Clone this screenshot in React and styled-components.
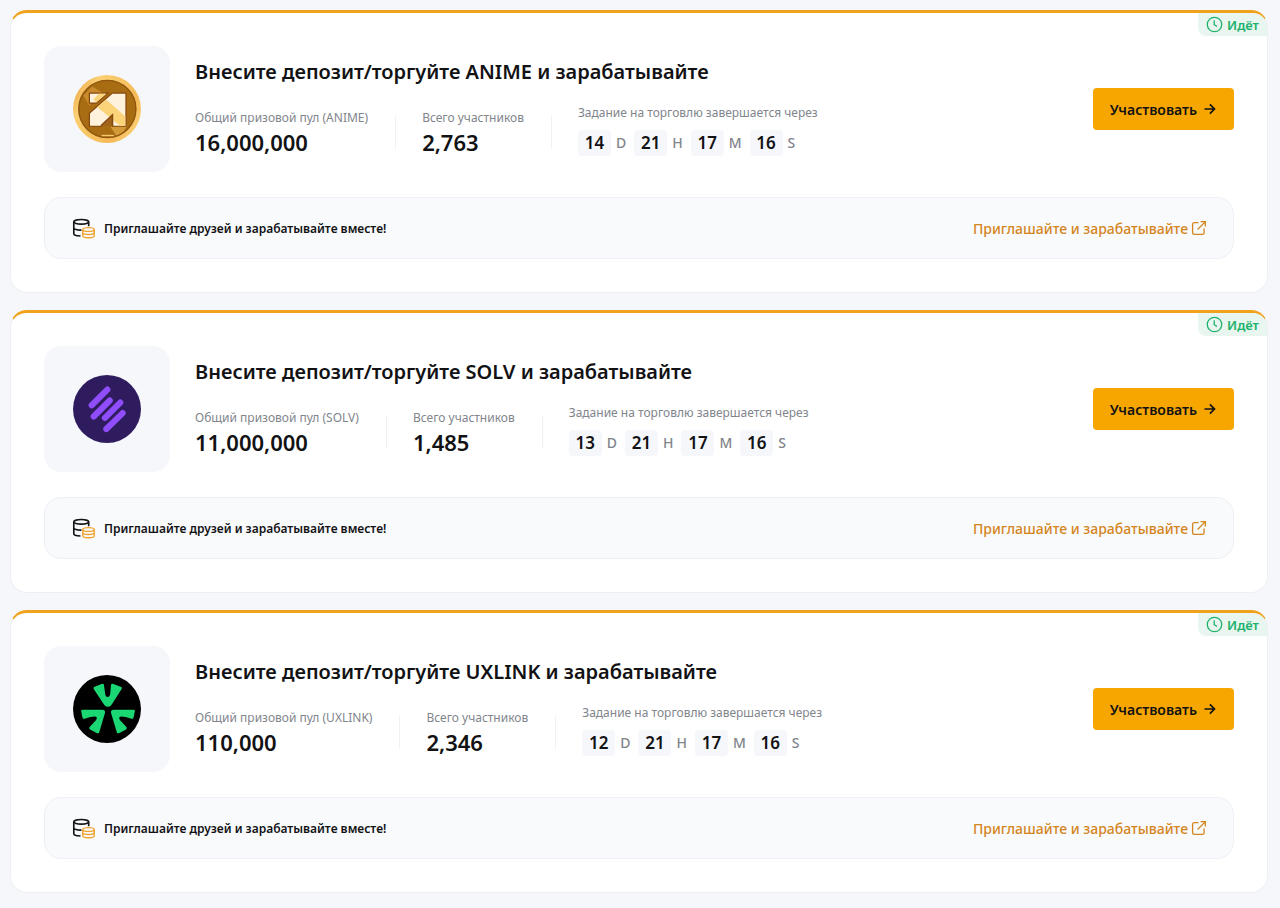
import styled, { createGlobalStyle } from "styled-components";

const GlobalStyle = createGlobalStyle`
  * {
    box-sizing: border-box;
  }

  body {
    margin: 0;
    background-color: #f5f7fb;
    color: #121214;
    font-family: "Noto Sans", sans-serif;
  }
`;

const List = styled.main`
  display: flex;
  flex-direction: column;
  gap: 17px;
  padding: 10px 12px 15px 10px;
`;

const Card = styled.article`
  position: relative;
  padding: 33px;
  border: 1px solid #edeff3;
  border-top: 3px solid #f0a21c;
  border-radius: 17px;
  background-color: white;
`;

const Badge = styled.span`
  position: absolute;
  top: 0;
  right: 0;
  display: flex;
  align-items: center;
  gap: 4px;
  height: 23px;
  padding: 0 8px;
  border-radius: 0 14px 0 8px;
  background-color: #e9f6f0;
  color: #20b26c;
  font-size: 13px;
  font-weight: 600;
`;

const Top = styled.div`
  display: flex;
  align-items: center;
  gap: 25px;
`;

const LogoBox = styled.div`
  display: flex;
  align-items: center;
  justify-content: center;
  width: 126px;
  height: 126px;
  border-radius: 17px;
  background-color: #f5f7fb;
`;

const Info = styled.div`
  flex: 1;
`;

const Title = styled.h2`
  margin: 0 0 17px;
  font-size: 20px;
  font-weight: 600;
  line-height: 30px;
`;

const Stats = styled.div`
  display: flex;
  align-items: center;
  height: 57px;
`;

const Divider = styled.span`
  width: 1px;
  height: 33px;
  margin: 0 26px 0 27px;
  background-color: #f0f1f4;
`;

const Label = styled.div`
  color: #81858c;
  font-size: 12px;
  line-height: 18px;
`;

const Value = styled.div`
  font-size: 22px;
  font-weight: 600;
  line-height: 30px;
`;

const Timer = styled.div`
  align-self: flex-start;
`;

const Countdown = styled.div`
  display: flex;
  align-items: center;
  margin-top: 8px;
`;

const Digits = styled.span`
  width: 33px;
  border-radius: 4px;
  background-color: #f5f7fa;
  font-size: 17px;
  font-weight: 600;
  line-height: 26px;
  text-align: center;
`;

const Unit = styled.span`
  margin: 0 8px 0 5px;
  color: #81858c;
  font-size: 14px;
  font-weight: 500;
  line-height: 26px;
`;

const JoinButton = styled.button`
  display: flex;
  align-items: center;
  justify-content: center;
  gap: 6px;
  height: 42px;
  padding: 0 17px;
  border: none;
  border-radius: 4px;
  background-color: #f7a600;
  color: #121214;
  font-family: inherit;
  font-size: 14px;
  font-weight: 600;
  cursor: pointer;
`;

const Invite = styled.div`
  display: flex;
  align-items: center;
  justify-content: space-between;
  height: 62px;
  margin-top: 25px;
  padding: 0 26px 0 27px;
  border: 1px solid #edf0f4;
  border-radius: 17px;
  background-color: #f9fafc;
`;

const InviteText = styled.div`
  display: flex;
  align-items: center;
  gap: 8px;
  font-size: 12px;
  font-weight: 600;
`;

const InviteLink = styled.a`
  display: flex;
  align-items: center;
  gap: 3px;
  color: #d4851d;
  font-size: 14px;
  font-weight: 500;
  text-decoration: none;
`;

const ClockIcon = () => (
  <svg width="17" height="17" viewBox="0 0 17 17" fill="none" stroke="currentColor" strokeWidth="1.3">
    <circle cx="8.5" cy="8.5" r="7.2" />
    <path d="M8.2 4.3v4.4l2.8 1.7" />
  </svg>
);

const ArrowIcon = () => (
  <svg width="14" height="14" viewBox="0 0 14 14" fill="none" stroke="currentColor" strokeWidth="1.7">
    <path d="M1.5 7h10M6.9 2.3 11.5 7l-4.6 4.7" />
  </svg>
);

const ExternalIcon = () => (
  <svg width="16" height="16" viewBox="0 0 17 17" fill="none" stroke="currentColor" strokeWidth="1.4">
    <path d="M8 2.8H3.4a1.7 1.7 0 0 0-1.7 1.7v9a1.7 1.7 0 0 0 1.7 1.7h8.8a1.7 1.7 0 0 0 1.7-1.7V9" />
    <path d="M10.2 1.8h5v5M15 2 7 10" />
  </svg>
);

const CoinsIcon = () => (
  <svg width="24" height="21" viewBox="0 0 25 22" fill="none" strokeWidth="1.7">
    <g stroke="#121214">
      <ellipse cx="9.6" cy="4" rx="7.8" ry="2.4" />
      <path d="M1.8 4v12.4c0 1.4 3 2.2 7 2.4M17.4 4v4.6M1.8 10.3c0 1.4 3.2 2.4 8 2.4" />
    </g>
    <g stroke="#f0a22e" strokeWidth="1.4">
      <ellipse cx="17.2" cy="12" rx="6" ry="2" />
      <path d="M11.2 12v6.5c0 1.2 2.6 2.2 6 2.2s6-1 6-2.2V12M11.2 15.2c0 1.2 2.6 2.1 6 2.1s6-.9 6-2.1" />
    </g>
  </svg>
);

const AnimeLogo = () => (
  <svg width="68" height="68" viewBox="0 0 200 200">
    <defs>
      <linearGradient id="anime-rim" x1="0" y1="0.2" x2="1" y2="0.8">
        <stop offset="0" stopColor="#eda747" />
        <stop offset="0.2" stopColor="#fbd074" />
        <stop offset="0.42" stopColor="#f7c765" />
        <stop offset="0.75" stopColor="#f5b958" />
        <stop offset="1" stopColor="#fbd478" />
      </linearGradient>
      <clipPath id="anime-face">
        <circle cx="101" cy="100" r="85" />
      </clipPath>
    </defs>
    <circle cx="100" cy="100" r="100" fill="url(#anime-rim)" />
    <g clipPath="url(#anime-face)">
      <rect width="200" height="200" fill="#a86c12" />
      <path d="M30 60 56 34l34 20-42 36z" fill="#c88a2c" />
      <path d="M110 152l50-4-25 42z" fill="#d39a3a" />
    </g>
    <circle cx="101" cy="100" r="84" fill="none" stroke="#8f560e" strokeWidth="4" />
    <g fill="#fff2dc" stroke="#85480f" strokeWidth="7" paintOrder="stroke">
      <path d="M50 55h48L68 81H50z" />
      <path d="M116 55h38v94h-36v-34l-36 34H50v-36z" />
    </g>
    <path d="M76 55h22L68 81 60 71z" fill="#fbd47a" />
    <path d="M71 94 97 72l57 50v27h-16z" fill="#fbd47a" />
    <path d="M118 149v-34l-36 34z" fill="#a0641a" />
    <path d="M116 149v-32l-34 32" fill="none" stroke="#85480f" strokeWidth="4" />
    <path d="M84 178h36" stroke="#f5c970" strokeWidth="4" />
  </svg>
);

const SolvLogo = () => (
  <svg width="68" height="68" viewBox="0 0 200 200">
    <circle cx="100" cy="100" r="100" fill="#2f1c5e" />
    <path
      d="M101 43 55 89M108 75 61 122M139 81 94 126M146 112 98 159"
      stroke="#8f4dfb"
      strokeWidth="18"
      strokeLinecap="round"
    />
  </svg>
);

const UxlinkLogo = () => {
  const sidePetal =
    "M24 106Q24 102 28 102L86 102Q96 102 94 112L77 169Q75 173 71 171L50 160Q46 157 49 153L68 132Q74 122 63 122Q54 122 34 129Q29 130 28 126Z";

  return (
    <svg width="68" height="68" viewBox="0 0 200 200">
      <circle cx="100" cy="100" r="100" fill="black" />
      <g fill="#1bd773">
        <path d="M62 35 86 26Q90 25 91 29L95 58Q97 65 102 65Q107 65 109 58L112 29Q113 25 117 26L142 35Q145 37 143 41L113 88Q103 99 92 88L61 41Q59 37 62 35Z" />
        <path d={sidePetal} />
        <path d={sidePetal} transform="translate(206 0) scale(-1 1)" />
      </g>
    </svg>
  );
};

const events = [
  { token: "ANIME", Logo: AnimeLogo, pool: "16,000,000", members: "2,763", time: ["14", "21", "17", "16"] },
  { token: "SOLV", Logo: SolvLogo, pool: "11,000,000", members: "1,485", time: ["13", "21", "17", "16"] },
  { token: "UXLINK", Logo: UxlinkLogo, pool: "110,000", members: "2,346", time: ["12", "21", "17", "16"] },
];

const units = ["D", "H", "M", "S"];

const EventCard = ({ token, Logo, pool, members, time }) => {
  return (
    <Card>
      <Badge>
        <ClockIcon />
        Идёт
      </Badge>
      <Top>
        <LogoBox>
          <Logo />
        </LogoBox>
        <Info>
          <Title>Внесите депозит/торгуйте {token} и зарабатывайте</Title>
          <Stats>
            <div>
              <Label>Общий призовой пул ({token})</Label>
              <Value>{pool}</Value>
            </div>
            <Divider />
            <div>
              <Label>Всего участников</Label>
              <Value>{members}</Value>
            </div>
            <Divider />
            <Timer>
              <Label>Задание на торговлю завершается через</Label>
              <Countdown>
                {units.map((unit, i) => [
                  <Digits key={unit}>{time[i]}</Digits>,
                  <Unit key={unit + "-unit"}>{unit}</Unit>,
                ])}
              </Countdown>
            </Timer>
          </Stats>
        </Info>
        <JoinButton type="button">
          Участвовать
          <ArrowIcon />
        </JoinButton>
      </Top>
      <Invite>
        <InviteText>
          <CoinsIcon />
          Приглашайте друзей и зарабатывайте вместе!
        </InviteText>
        <InviteLink href="#">
          Приглашайте и зарабатывайте
          <ExternalIcon />
        </InviteLink>
      </Invite>
    </Card>
  );
};

const App = () => {
  return (
    <>
      <GlobalStyle />
      <List>
        {events.map((event) => (
          <EventCard key={event.token} {...event} />
        ))}
      </List>
    </>
  );
};

export default App;
